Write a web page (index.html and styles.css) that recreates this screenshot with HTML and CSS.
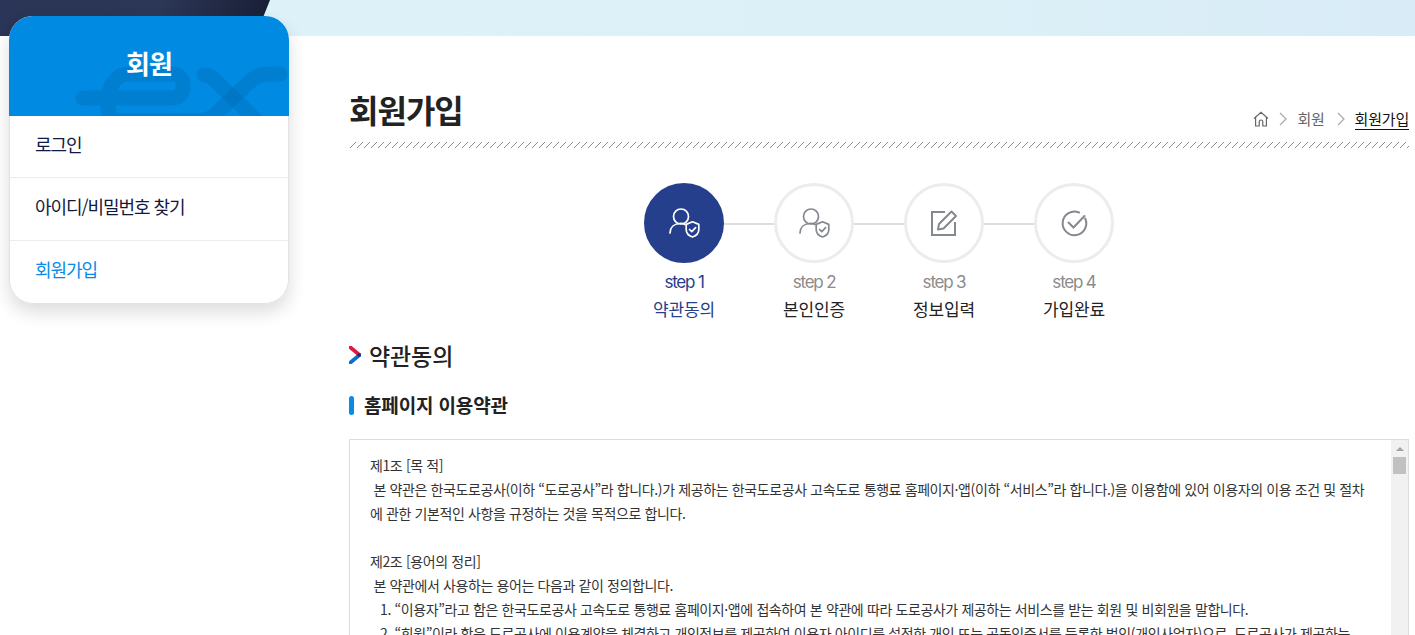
FILE: index.html
```html
<!DOCTYPE html>
<html lang="ko">
<head>
<meta charset="utf-8">
<title>회원가입</title>
<link rel="stylesheet" href="styles.css">
</head>
<body>
<header class="topband">
  <svg class="topband-dark" width="272" height="36" viewBox="0 0 272 36"><defs><linearGradient id="g" x1="0" x2="1" y1="0" y2="0"><stop offset="0" stop-color="#2a3557"/><stop offset=".6" stop-color="#2c3656"/><stop offset="1" stop-color="#191f36"/></linearGradient></defs><path d="M0 0H270L262 20V36H0Z" fill="url(#g)"/></svg>
</header>
<div class="layout">
  <aside class="side">
    <div class="side-head">
      <svg class="side-logo" width="280" height="100" viewBox="0 0 280 100" fill="none" stroke="#005a96" stroke-opacity=".22" stroke-width="15" stroke-linecap="round"><path d="M74 82H163C178 82 178 58 163 58H121C105 58 99 72 99 86V92C99 100 104 105 112 105H190C200 105 205 100 212 93L236 70C246 61 250 58 259 58H271"/><path d="M195 59C199 59 202 60 205 63L255 112"/></svg>
      <h2 class="side-title">회원</h2>
    </div>
    <ul class="side-menu">
      <li><a class="side-link" href="#">로그인</a></li>
      <li><a class="side-link" href="#">아이디/비밀번호 찾기</a></li>
      <li><a class="side-link is-current" href="#">회원가입</a></li>
    </ul>
  </aside>
  <main class="content">
    <div class="title-row">
      <h1 class="page-title">회원가입</h1>
      <nav class="crumbs">
        <svg class="crumb-home" width="16" height="16" viewBox="0 0 16 16" fill="none" stroke="#666" stroke-width="1.2"><path d="M1 7.500 8 1.200l7 6.300M2.600 6.400V15h3.600v-4.200a1.800 1.800 0 0 1 3.600 0V15h3.600V6.400"/></svg>
        <svg class="crumb-sep" width="8" height="14" viewBox="0 0 8 14" fill="none" stroke="#aaa" stroke-width="1.2"><path d="m1 1 6 6-6 6"/></svg>
        <span class="crumb">회원</span>
        <svg class="crumb-sep" width="8" height="14" viewBox="0 0 8 14" fill="none" stroke="#aaa" stroke-width="1.2"><path d="m1 1 6 6-6 6"/></svg>
        <span class="crumb crumb-now">회원가입</span>
      </nav>
    </div>
    <div class="hatch"></div>
    <ol class="steps">
      <li class="step is-active">
        <span class="step-circle">
          <svg width="32" height="32" viewBox="0 0 32 32" fill="none" stroke="currentColor" stroke-width="1.7" stroke-linecap="round" stroke-linejoin="round"><circle cx="13" cy="9.500" r="7.500"/><path d="M2 26c0-5.500 4-9 9.500-9.500 2.500-.2 4 .1 5.500 1"/><path d="M24.500 14.800l6.300 2.600v5.200c0 4-3 6.400-6.300 7.400-3.300-1-6.300-3.400-6.300-7.400v-5.200z"/><path d="m21.600 22.500 2.200 2.200 3.800-4" stroke-width="1.700"/></svg>
        </span>
        <span class="step-no">step 1</span>
        <span class="step-name">약관동의</span>
      </li>
      <li class="step">
        <span class="step-circle">
          <svg width="32" height="32" viewBox="0 0 32 32" fill="none" stroke="currentColor" stroke-width="1.7" stroke-linecap="round" stroke-linejoin="round"><circle cx="13" cy="9.500" r="7.500"/><path d="M2 26c0-5.500 4-9 9.500-9.500 2.500-.2 4 .1 5.500 1"/><path d="M24.500 14.800l6.300 2.600v5.200c0 4-3 6.400-6.300 7.400-3.300-1-6.300-3.400-6.300-7.400v-5.200z"/><path d="m21.600 22.500 2.200 2.200 3.800-4" stroke-width="1.700"/></svg>
        </span>
        <span class="step-no">step 2</span>
        <span class="step-name">본인인증</span>
      </li>
      <li class="step">
        <span class="step-circle">
          <svg width="32" height="32" viewBox="0 0 32 32" fill="none" stroke="currentColor" stroke-width="2"><path d="M17 5H4v23h23V15"/><path d="M10 22.500l1-5.500L23.500 4.500l4.500 4.500L15.500 21.500z" stroke-linejoin="round"/></svg>
        </span>
        <span class="step-no">step 3</span>
        <span class="step-name">정보입력</span>
      </li>
      <li class="step">
        <span class="step-circle">
          <svg width="32" height="32" viewBox="0 0 32 32" fill="none" stroke="currentColor" stroke-width="2" stroke-linecap="round"><path d="M27.200 11.500A11.800 11.800 0 1 1 21 5.500"/><path d="m10.500 15.500 5 5 11-11.500"/></svg>
        </span>
        <span class="step-no">step 4</span>
        <span class="step-name">가입완료</span>
      </li>
    </ol>
    <h3 class="sec-title">
      <svg width="12" height="18" viewBox="0 0 12 18"><path d="M1.500 1.500 10.500 9" stroke="#e3173e" stroke-width="3.600" stroke-linecap="round"/><path d="M10.500 9 1.500 16.500" stroke="#0b6fd0" stroke-width="3.600" stroke-linecap="round"/><circle cx="10" cy="9" r="1.800" fill="#1c2a70"/></svg>
      약관동의
    </h3>
    <h4 class="sub-title">홈페이지 이용약관</h4>
    <div class="terms">
      <div class="terms-text">
        <p>제1조 [목 적]</p>
        <p>&nbsp;본 약관은 한국도로공사(이하 “도로공사”라 합니다.)가 제공하는 한국도로공사 고속도로 통행료 홈페이지·앱(이하 “서비스”라 합니다.)을 이용함에 있어 이용자의 이용 조건 및 절차에 관한 기본적인 사항을 규정하는 것을 목적으로 합니다.</p>
        <p>&nbsp;</p>
        <p>제2조 [용어의 정리]</p>
        <p>&nbsp;본 약관에서 사용하는 용어는 다음과 같이 정의합니다.</p>
        <p class="indent">1. “이용자”라고 함은 한국도로공사 고속도로 통행료 홈페이지·앱에 접속하여 본 약관에 따라 도로공사가 제공하는 서비스를 받는 회원 및 비회원을 말합니다.</p>
        <p class="indent">2. “회원”이라 함은 도로공사에 이용계약을 체결하고 개인정보를 제공하여 이용자 아이디를 설정한 개인 또는 공동인증서를 등록한 법인(개인사업자)으로, 도로공사가 제공하는</p>
      </div>
      <div class="scrollbar"><span class="scroll-up"></span><span class="scroll-thumb"></span></div>
    </div>
  </main>
</div>
</body>
</html>
```
FILE: styles.css
```css
* { box-sizing: border-box; }
html, body { margin: 0; padding: 0; height: 635px; overflow: hidden; background: #fff; }
body { font-family: "Noto Sans CJK KR", "Noto Sans", sans-serif; color: #222; }
ul, ol { list-style: none; margin: 0; padding: 0; }
h1, h2, h3, h4, p { margin: 0; }
a { text-decoration: none; color: inherit; }

.topband { height: 36px; background: linear-gradient(90deg, #def2f8 0%, #dcf0f8 70%, #d8ebf7 100%); }
.topband-dark { display: block; }

.layout { display: flex; align-items: flex-start; }
.side { width: 280px; margin: -20px 0 0 9px; border-radius: 24px; background: #fff; box-shadow: 0 8px 18px rgba(0,0,0,.14); flex: none; position: relative; }
.side-head { height: 100px; background: #008ae2; border-radius: 24px 24px 0 0; position: relative; overflow: hidden; display: flex; justify-content: center; padding-top: 28px; }
.side-logo { position: absolute; left: 0; top: 0; }
.side-title { position: relative; color: #fff; font-size: 26px; font-weight: 700; line-height: 38px; letter-spacing: -1px; height: 38px; }
.side-menu { border: 1px solid #e2e2e2; border-top: 0; border-radius: 0 0 24px 24px; }
.side-menu li + li { border-top: 1px solid #ececec; }
.side-link { display: block; height: 61px; padding-left: 25px; line-height: 57px; font-size: 18px; letter-spacing: -1.05px; color: #12193f; }
.side-menu li + li .side-link { height: 62px; }
.side-menu li:last-child .side-link { line-height: 57px; }
.side-link.is-current { color: #0a8ae6; }

.content { width: 1060px; margin-left: 60px; flex: none; }
.title-row { display: flex; justify-content: space-between; align-items: flex-end; height: 70px; margin-top: 36px; }
.page-title { font-size: 32px; font-weight: 700; line-height: 46px; letter-spacing: -1px; color: #222; margin-bottom: 10px; }
.crumbs { display: flex; align-items: center; margin-bottom: 12px; font-size: 15px; letter-spacing: -.2px; color: #666; }
.crumb-home { margin-right: 10px; }
.crumb-sep { margin-right: 10px; }
.crumb { margin-right: 12px; line-height: 22px; }
.crumb-now { margin-right: 0; color: #111; border-bottom: 1px solid #111; line-height: 20px; }
.hatch { height: 6px; background: linear-gradient(135deg, #fff 0 45%, #8e8e8e 45% 55%, #fff 55%) 0 0 / 7px 7px; }

.steps { display: flex; justify-content: center; gap: 50px; margin-top: 35px; }
.step { width: 80px; display: flex; flex-direction: column; align-items: center; position: relative; }
.step + .step::before { content: ""; position: absolute; left: -50px; top: 40px; width: 50px; height: 2px; background: #dedede; }
.step-circle { width: 80px; height: 80px; border-radius: 50%; border: 3px solid #ececec; display: flex; align-items: center; justify-content: center; color: #85888f; background: #fff; }
.step-no { margin-top: 7px; font-family: "Inter", sans-serif; font-size: 17px; line-height: 24px; letter-spacing: -1.2px; color: #8b8b8b; white-space: nowrap; }
.step-name { font-size: 17px; line-height: 29px; letter-spacing: -.1px; color: #222; white-space: nowrap; }
.is-active .step-circle { background: #263f8c; border-color: #263f8c; color: #fff; }
.is-active .step-no, .is-active .step-name { color: #263f8c; }

.sec-title { display: flex; align-items: center; gap: 8px; margin-top: 14px; font-size: 23px; font-weight: 500; line-height: 36px; letter-spacing: -.1px; color: #222; }
.sub-title { margin-top: 18px; padding-left: 15px; font-size: 19px; font-weight: 700; line-height: 28px; letter-spacing: -.15px; color: #222; position: relative; }
.sub-title::before { content: ""; position: absolute; left: 0; top: 5px; width: 5px; height: 19px; border-radius: 3px; background: #0a8ae6; }
.terms { margin-top: 20px; height: 300px; border: 1px solid #dcdcdc; display: flex; overflow: hidden; }
.terms-text { flex: 1; padding: 13px 20px 0; font-size: 14px; line-height: 24px; letter-spacing: -.39px; color: #333; }
.indent { padding-left: 10px; }
.scrollbar { width: 17px; background: #f1f1f1; display: flex; flex-direction: column; align-items: center; flex: none; }
.scroll-up { margin-top: 7px; width: 0; height: 0; border: 4px solid transparent; border-top: 0; border-bottom: 4px solid #a3a3a3; }
.scroll-thumb { margin-top: 6px; width: 13px; height: 17px; background: #c1c1c1; }
```
